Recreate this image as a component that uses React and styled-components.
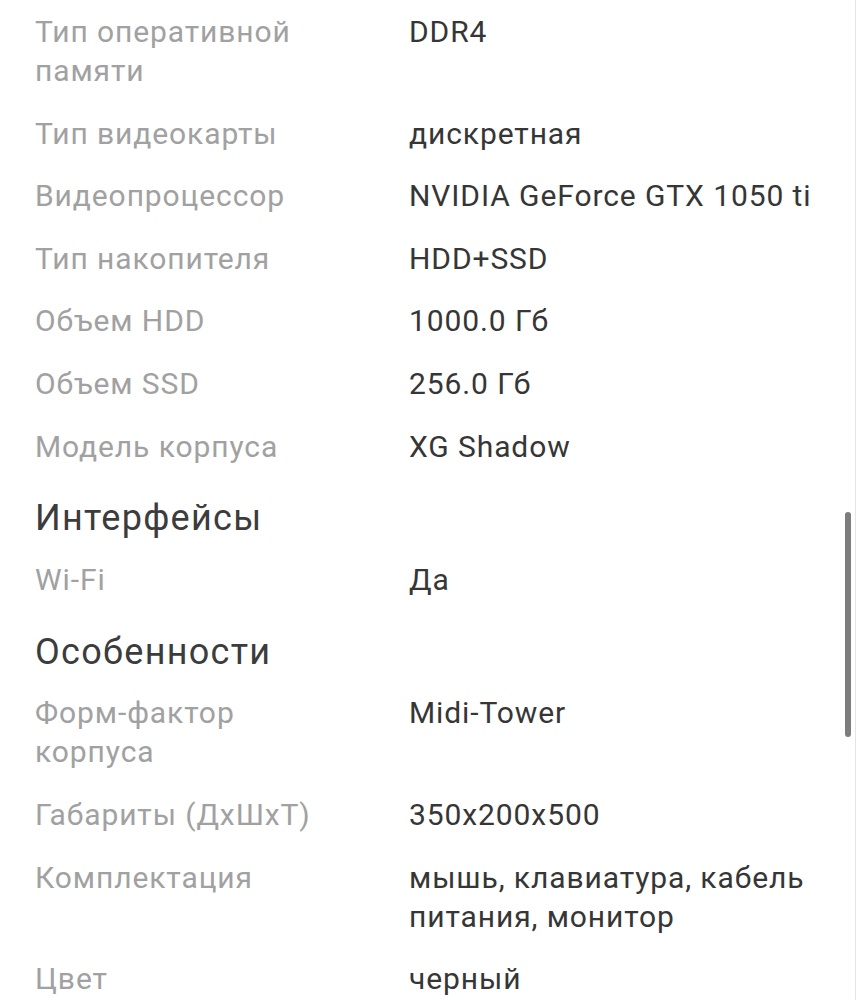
import React from "react"
import styled, { createGlobalStyle } from "styled-components"

const GlobalStyle = createGlobalStyle`
  html, body {
    margin: 0;
    padding: 0;
    background: #ffffff;
  }
  body {
    font-family: Roboto, "Noto Sans", "Liberation Sans", sans-serif;
  }
`

const Page = styled.div`
  padding: 0 35px;
  min-height: 1000px;
  box-sizing: border-box;
  overflow: hidden;
`

const Section = styled.h2`
  margin: 0;
  padding: 19px 0 7.8px;
  font-size: 36px;
  line-height: 44px;
  font-weight: 400;
  letter-spacing: 1.3px;
  color: #3c3c3c;
`

const Row = styled.div`
  display: grid;
  grid-template-columns: 300px 1fr;
  column-gap: 74px;
  padding: 12px 0 11.6px;
`

const Label = styled.div`
  font-size: 30px;
  line-height: 39px;
  letter-spacing: 0.9px;
  color: #a1a1a1;
`

const Value = styled.div`
  font-size: 30px;
  line-height: 39px;
  letter-spacing: 0.9px;
  color: #363636;
`

const Edge = styled.div`
  position: fixed;
  top: 0;
  right: 1px;
  width: 1px;
  height: 100%;
  background: #e4e4e4;
`

const Thumb = styled.div`
  position: fixed;
  top: 512px;
  right: 6px;
  width: 6px;
  height: 225px;
  border-radius: 3px;
  background: #7d7d7d;
`

const blocks = [
  {
    rows: [
      ["Тип оперативной памяти", "DDR4"],
      ["Тип видеокарты", "дискретная"],
      ["Видеопроцессор", "NVIDIA GeForce GTX 1050 ti"],
      ["Тип накопителя", "HDD+SSD"],
      ["Объем HDD", "1000.0 Гб"],
      ["Объем SSD", "256.0 Гб"],
      ["Модель корпуса", "XG Shadow"],
    ],
  },
  {
    title: "Интерфейсы",
    rows: [["Wi-Fi", "Да"]],
  },
  {
    title: "Особенности",
    rows: [
      ["Форм-фактор корпуса", "Midi-Tower"],
      ["Габариты (ДхШхТ)", "350x200x500"],
      ["Комплектация", "мышь, клавиатура, кабель питания, монитор"],
      ["Цвет", "черный"],
    ],
  },
]

const App = () => (
  <>
    <GlobalStyle />
    <Page>
      {blocks.map((block, i) => (
        <div key={i}>
          {block.title && <Section>{block.title}</Section>}
          {block.rows.map(([label, value]) => (
            <Row key={label}>
              <Label>{label}</Label>
              <Value>{value}</Value>
            </Row>
          ))}
        </div>
      ))}
    </Page>
    <Edge />
    <Thumb />
  </>
)

export default App
